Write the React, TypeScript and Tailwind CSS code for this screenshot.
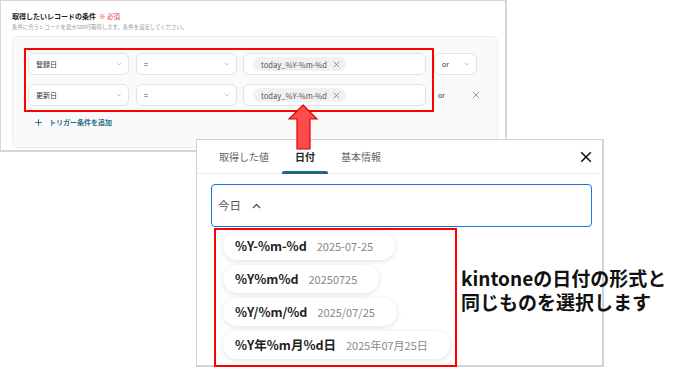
import React from "react";

const Chev = () => (
  <svg width="6" height="4" viewBox="0 0 6 4" className="shrink-0">
    <path d="M0.8 0.8 L3 3 L5.2 0.8" fill="none" stroke="#bdbdbd" strokeWidth="0.8" />
  </svg>
);

const Select = ({ label, w }: { label: string; w: string }) => (
  <div className={`${w} h-[22px] bg-white border border-[#e2e2e2] rounded-[6px] flex items-center justify-between pl-[7px] pr-[6px]`}>
    <span className="text-[7px] text-[#333] leading-none">{label}</span>
    <Chev />
  </div>
);

const XIcon = ({ s, c, sw }: { s: number; c: string; sw: number }) => (
  <svg width={s} height={s} viewBox="0 0 10 10">
    <path d="M1 1 L9 9 M9 1 L1 9" stroke={c} strokeWidth={sw} fill="none" />
  </svg>
);

const ValueInput = () => (
  <div className="w-[183px] h-[22px] bg-white border border-[#e2e2e2] rounded-[6px] flex items-center pl-[9px]">
    <div className="h-[14px] rounded-full bg-[#f1f1f1] flex items-center pl-[8px] pr-[6px] gap-[6px]">
      <span className="text-[7.6px] text-[#555] leading-none">today_%Y-%m-%d</span>
      <XIcon s={7} c="#666" sw={1} />
    </div>
  </div>
);

const Chip = ({ f, d }: { f: string; d: string }) => (
  <div className="self-start h-[28px] rounded-full bg-white shadow-[0_1px_5px_rgba(0,0,0,0.13)] flex items-center pl-[12px] pr-[22px] gap-[10px]">
    <span className="text-[12.5px] font-bold text-[#222] leading-none">{f}</span>
    <span className="text-[11px] text-[#888] leading-none">{d}</span>
  </div>
);

export default function App() {
  return (
    <div className="relative w-[688px] h-[367px] bg-white overflow-hidden font-['Noto_Sans_CJK_JP','Noto_Sans',sans-serif]">
      {/* background screenshot */}
      <div className="absolute left-0 top-0 w-[507px] h-[152px] bg-white border-l border-t border-r-2 border-b-2 border-[#d6d6d6] flex flex-col">
        <div className="pl-[11px] pt-[11px] flex items-center gap-[3px] h-[19px]">
          <span className="text-[7px] font-bold text-[#222] leading-none">取得したいレコードの条件</span>
          <span className="text-[6.5px] text-[#e53935] leading-none">※ 必須</span>
        </div>
        <div className="pl-[11px] mt-[5px] text-[5.4px] text-[#9a9a9a] leading-none">
          条件に合うレコードを最大500行取得します。条件を設定してください。
        </div>
        <div className="ml-[11px] mt-[6px] w-[486px] h-[112px] bg-[#fafafa] border border-[#ececec] rounded-[6px] pt-[16px] pl-[15px] flex flex-col">
          <div className="flex items-center">
            <Select label="登録日" w="w-[101px]" />
            <div className="w-[7px]" />
            <Select label="=" w="w-[101px]" />
            <div className="w-[6px]" />
            <ValueInput />
            <div className="w-[8px]" />
            <Select label="or" w="w-[43px]" />
          </div>
          <div className="flex items-center mt-[9px]">
            <Select label="更新日" w="w-[101px]" />
            <div className="w-[7px]" />
            <Select label="=" w="w-[101px]" />
            <div className="w-[6px]" />
            <ValueInput />
            <span className="ml-[12px] text-[7px] text-[#333] leading-none">or</span>
            <span className="ml-[27px]"><XIcon s={8} c="#777" sw={0.9} /></span>
          </div>
          <div className="flex items-center mt-[13px] pl-[7px] gap-[7px] text-[#2a6f8f]">
            <svg width="7" height="7" viewBox="0 0 7 7">
              <path d="M3.5 0.3 V6.7 M0.3 3.5 H6.7" stroke="#2a6f8f" strokeWidth="1" />
            </svg>
            <span className="text-[7px] font-bold leading-none">トリガー条件を追加</span>
          </div>
        </div>
      </div>

      {/* red box top */}
      <div className="absolute left-[24px] top-[48px] w-[410px] h-[64px] border-2 border-[#ff0000]" />

      {/* modal */}
      <div className="absolute left-[196px] top-[139px] w-[408px] h-[228px] bg-white border-l border-t border-r-2 border-b-2 border-[#d2d2d2] flex flex-col">
        <div className="h-[34px] border-b border-[#ececec] flex items-stretch pl-[9px] relative">
          <div className="px-[13px] flex items-center text-[10px] text-[#666] leading-none">取得した値</div>
          <div className="px-[13px] flex items-center text-[10px] font-bold text-[#222] leading-none relative">
            日付
            <div className="absolute left-0 right-0 bottom-[-1px] h-[3px] rounded-t-[2px] bg-[#1b6b7d]" />
          </div>
          <div className="px-[13px] flex items-center text-[10px] text-[#666] leading-none">基本情報</div>
          <div className="ml-auto mr-[10px] flex items-center">
            <XIcon s={12} c="#111" sw={1.3} />
          </div>
        </div>
        <div className="ml-[14px] mt-[10px] w-[381px] h-[43px] border-[1.5px] border-[#1a73e8] rounded-[4px] flex items-center pl-[6px] gap-[11px]">
          <span className="text-[11.5px] text-[#555] leading-none">今日</span>
          <svg width="9" height="6" viewBox="0 0 9 6">
            <path d="M1 5 L4.5 1.5 L8 5" fill="none" stroke="#555" strokeWidth="1.4" />
          </svg>
        </div>
        <div className="ml-[26px] mt-[5px] flex flex-col gap-[5px]">
          <Chip f="%Y-%m-%d" d="2025-07-25" />
          <Chip f="%Y%m%d" d="20250725" />
          <Chip f="%Y/%m/%d" d="2025/07/25" />
          <Chip f="%Y年%m月%d日" d="2025年07月25日" />
        </div>
      </div>

      {/* red box bottom */}
      <div className="absolute left-[214px] top-[228px] w-[243px] h-[139px] border-[2.5px] border-[#ff0000]" />

      {/* arrow */}
      <svg className="absolute left-[287px] top-[104px]" width="32" height="46" viewBox="0 0 32 46">
        <path d="M16 1 L30 15 L23 15 L23 45 L10 45 L10 15 L2 15 Z" fill="#ff4b4b" stroke="#e00000" strokeWidth="1.2" />
      </svg>

      {/* annotation */}
      <div className="absolute left-[461px] top-[266px] text-[19px] font-bold text-[#111] leading-[24px]">
        <div>kintoneの日付の形式と</div>
        <div>同じものを選択します</div>
      </div>
    </div>
  );
}
